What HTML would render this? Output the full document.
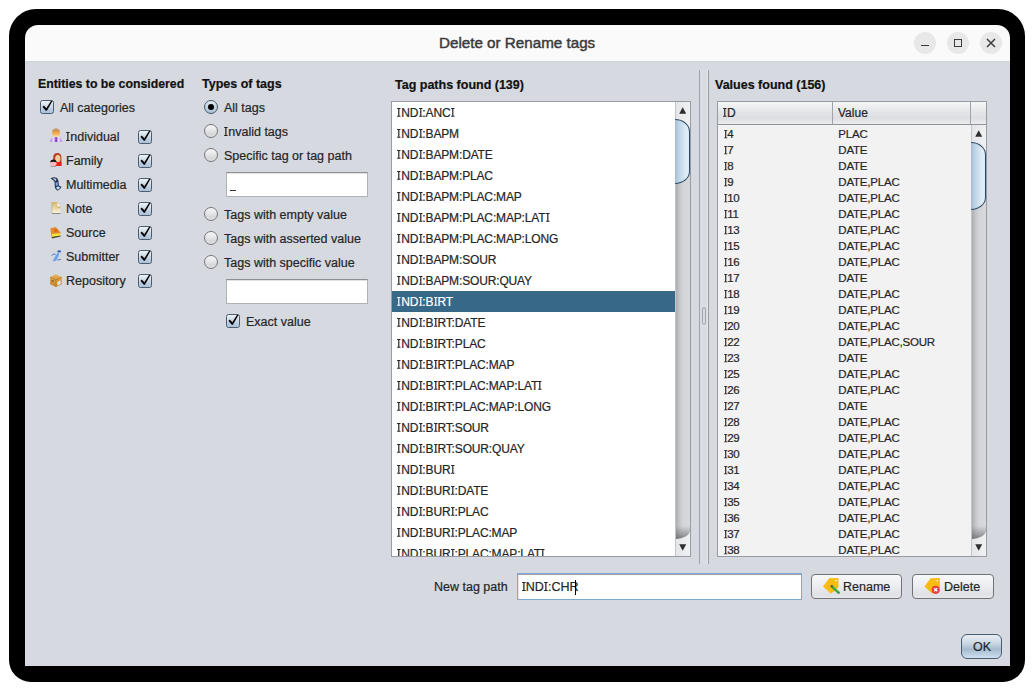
<!DOCTYPE html><html><head><meta charset="utf-8"><style>
html,body{margin:0;padding:0;background:#fff;width:1034px;height:691px;overflow:hidden;position:relative;font-family:"Liberation Sans",sans-serif}
.a{position:absolute;box-sizing:border-box}
.t{position:absolute;white-space:nowrap;-webkit-text-stroke:0.2px currentColor}
.si{width:0.30em;height:0.72em;margin:0 0.02em;fill:currentColor;vertical-align:baseline;overflow:visible}
.cb{position:absolute;width:14px;height:14px;box-sizing:border-box;border:1.3px solid #4a5d70;border-radius:2.5px;background:linear-gradient(#edf1f6,#d3dee8 40%,#b9cde0 70%,#a9c2d8)}
.rd{position:absolute;width:14px;height:14px;box-sizing:border-box;border-radius:50%;border:1.3px solid #747679;background:linear-gradient(#f7f7f8,#e6e7e9 45%,#d5d6d9 75%,#e3e4e6)}
.rd.sel{border:1.5px solid #465a6d;background:linear-gradient(#e4ebf2,#c2d3e2 50%,#a9c0d5)}
.rd .dot{position:absolute;left:2.5px;top:2.5px;width:6px;height:6px;border-radius:50%;background:#000}
</style></head><body>
<div class="a" style="left:9px;top:9px;width:1016px;height:673px;background:#000;border-radius:27px 27px 22px 22px"></div>
<div class="a" style="left:24.5px;top:24.5px;width:985.0px;height:36.5px;background:#fafafa;border-radius:13px 13px 0 0"></div>
<div class="a" style="left:24.5px;top:61px;width:985.0px;height:605px;background:#d6d9e0"></div>
<div class="a" style="left:25px;top:61px;width:984px;height:1px;background:#cfd2d8"></div>
<div class="t" style="left:439px;top:34.5px;font-size:15.2px;line-height:16px;font-weight:normal;color:#3a3a3a;-webkit-text-stroke:0.45px #3a3a3a">Delete or Rename tags</div>
<div class="a" style="left:914px;top:32px;width:22px;height:22px;border-radius:50%;background:#e8e8e8"></div>
<div class="a" style="left:947px;top:32px;width:22px;height:22px;border-radius:50%;background:#e8e8e8"></div>
<div class="a" style="left:980px;top:32px;width:22px;height:22px;border-radius:50%;background:#e8e8e8"></div>
<div class="a" style="left:921px;top:44.5px;width:8px;height:1.5px;background:#3c3c3c"></div>
<div class="a" style="left:954px;top:39px;width:8px;height:8px;border:1.5px solid #3c3c3c"></div>
<svg class="a" style="left:986px;top:37.7px" width="10" height="10" viewBox="0 0 10 10"><path d="M1 1L9 9M9 1L1 9" stroke="#3c3c3c" stroke-width="1.5"/></svg>
<div class="t" style="left:38px;top:76.0px;font-size:12.3px;line-height:16px;font-weight:bold;color:#111;">Entities to be considered</div>
<div class="cb" style="left:40px;top:100px"><svg width="14" height="14" viewBox="0 0 14 14" style="position:absolute;left:-0.3px;top:-0.3px;overflow:visible"><path d="M1.5 5.9 L2.9 4.6 L5.3 7.3 L10.1 -0.3 L11.5 0.0 L5.9 9.7 L4.8 9.7 Z" fill="#000"/></svg></div>
<div class="t" style="left:60px;top:100.0px;font-size:12.5px;line-height:16px;font-weight:normal;color:#252525;">All categories</div>
<div class="t" style="left:66px;top:129.0px;font-size:12.5px;line-height:16px;font-weight:normal;color:#252525;"><svg class="si" viewBox="0 0 30 72"><path d="M1 0H29V7.5H20V64.5H29V72H1V64.5H10V7.5H1Z"/></svg>ndividual</div>
<div class="cb" style="left:138px;top:130px"><svg width="14" height="14" viewBox="0 0 14 14" style="position:absolute;left:-0.3px;top:-0.3px;overflow:visible"><path d="M1.5 5.9 L2.9 4.6 L5.3 7.3 L10.1 -0.3 L11.5 0.0 L5.9 9.7 L4.8 9.7 Z" fill="#000"/></svg></div>
<div class="t" style="left:66px;top:153.0px;font-size:12.5px;line-height:16px;font-weight:normal;color:#252525;">Family</div>
<div class="cb" style="left:138px;top:154px"><svg width="14" height="14" viewBox="0 0 14 14" style="position:absolute;left:-0.3px;top:-0.3px;overflow:visible"><path d="M1.5 5.9 L2.9 4.6 L5.3 7.3 L10.1 -0.3 L11.5 0.0 L5.9 9.7 L4.8 9.7 Z" fill="#000"/></svg></div>
<div class="t" style="left:66px;top:177.0px;font-size:12.5px;line-height:16px;font-weight:normal;color:#252525;">Multimedia</div>
<div class="cb" style="left:138px;top:178px"><svg width="14" height="14" viewBox="0 0 14 14" style="position:absolute;left:-0.3px;top:-0.3px;overflow:visible"><path d="M1.5 5.9 L2.9 4.6 L5.3 7.3 L10.1 -0.3 L11.5 0.0 L5.9 9.7 L4.8 9.7 Z" fill="#000"/></svg></div>
<div class="t" style="left:66px;top:201.0px;font-size:12.5px;line-height:16px;font-weight:normal;color:#252525;">Note</div>
<div class="cb" style="left:138px;top:202px"><svg width="14" height="14" viewBox="0 0 14 14" style="position:absolute;left:-0.3px;top:-0.3px;overflow:visible"><path d="M1.5 5.9 L2.9 4.6 L5.3 7.3 L10.1 -0.3 L11.5 0.0 L5.9 9.7 L4.8 9.7 Z" fill="#000"/></svg></div>
<div class="t" style="left:66px;top:225.0px;font-size:12.5px;line-height:16px;font-weight:normal;color:#252525;">Source</div>
<div class="cb" style="left:138px;top:226px"><svg width="14" height="14" viewBox="0 0 14 14" style="position:absolute;left:-0.3px;top:-0.3px;overflow:visible"><path d="M1.5 5.9 L2.9 4.6 L5.3 7.3 L10.1 -0.3 L11.5 0.0 L5.9 9.7 L4.8 9.7 Z" fill="#000"/></svg></div>
<div class="t" style="left:66px;top:249.0px;font-size:12.5px;line-height:16px;font-weight:normal;color:#252525;">Submitter</div>
<div class="cb" style="left:138px;top:250px"><svg width="14" height="14" viewBox="0 0 14 14" style="position:absolute;left:-0.3px;top:-0.3px;overflow:visible"><path d="M1.5 5.9 L2.9 4.6 L5.3 7.3 L10.1 -0.3 L11.5 0.0 L5.9 9.7 L4.8 9.7 Z" fill="#000"/></svg></div>
<div class="t" style="left:66px;top:273.0px;font-size:12.5px;line-height:16px;font-weight:normal;color:#252525;">Repository</div>
<div class="cb" style="left:138px;top:274px"><svg width="14" height="14" viewBox="0 0 14 14" style="position:absolute;left:-0.3px;top:-0.3px;overflow:visible"><path d="M1.5 5.9 L2.9 4.6 L5.3 7.3 L10.1 -0.3 L11.5 0.0 L5.9 9.7 L4.8 9.7 Z" fill="#000"/></svg></div>
<div class="t" style="left:202px;top:76.0px;font-size:12.5px;line-height:16px;font-weight:bold;color:#111;">Types of tags</div>
<div class="rd sel" style="left:204px;top:100px"><div class="dot"></div></div>
<div class="t" style="left:224px;top:100.0px;font-size:12.5px;line-height:16px;font-weight:normal;color:#252525;">All tags</div>
<div class="rd" style="left:204px;top:124px"></div>
<div class="t" style="left:224px;top:124.0px;font-size:12.5px;line-height:16px;font-weight:normal;color:#252525;"><svg class="si" viewBox="0 0 30 72"><path d="M1 0H29V7.5H20V64.5H29V72H1V64.5H10V7.5H1Z"/></svg>nvalid tags</div>
<div class="rd" style="left:204px;top:148px"></div>
<div class="t" style="left:224px;top:148.0px;font-size:12.5px;line-height:16px;font-weight:normal;color:#252525;">Specific tag or tag path</div>
<div class="rd" style="left:204px;top:207px"></div>
<div class="t" style="left:224px;top:207.0px;font-size:12.5px;line-height:16px;font-weight:normal;color:#252525;">Tags with empty value</div>
<div class="rd" style="left:204px;top:231px"></div>
<div class="t" style="left:224px;top:231.0px;font-size:12.5px;line-height:16px;font-weight:normal;color:#252525;">Tags with asserted value</div>
<div class="rd" style="left:204px;top:255px"></div>
<div class="t" style="left:224px;top:255.0px;font-size:12.5px;line-height:16px;font-weight:normal;color:#252525;">Tags with specific value</div>
<div class="a" style="left:226px;top:172px;width:142px;height:25px;background:#fff;border:1px solid #b0b1b4;border-top:1.5px solid #8e8f92;box-shadow:inset 0 1px 0 #e2e2e2"></div>
<div class="a" style="left:230px;top:190px;width:6px;height:1px;background:#333"></div>
<div class="a" style="left:226px;top:279px;width:142px;height:25px;background:#fff;border:1px solid #b0b1b4;border-top:1.5px solid #8e8f92;box-shadow:inset 0 1px 0 #e2e2e2"></div>
<div class="cb" style="left:226px;top:314px"><svg width="14" height="14" viewBox="0 0 14 14" style="position:absolute;left:-0.3px;top:-0.3px;overflow:visible"><path d="M1.5 5.9 L2.9 4.6 L5.3 7.3 L10.1 -0.3 L11.5 0.0 L5.9 9.7 L4.8 9.7 Z" fill="#000"/></svg></div>
<div class="t" style="left:246px;top:314.0px;font-size:12.5px;line-height:16px;font-weight:normal;color:#252525;">Exact value</div>
<div class="t" style="left:395px;top:77.0px;font-size:12.5px;line-height:16px;font-weight:bold;color:#111;">Tag paths found (139)</div>
<div class="a" style="left:391px;top:101px;width:300px;height:456px;background:#fff;border:1px solid #979ca4"></div>
<div class="a" style="left:392px;top:102px;width:283px;height:454px;overflow:hidden">
<div class="t" style="left:5.2px;top:3.0px;font-size:12px;line-height:16px;font-weight:normal;color:#252525;letter-spacing:-0.15px"><svg class="si" viewBox="0 0 30 72"><path d="M1 0H29V7.5H20V64.5H29V72H1V64.5H10V7.5H1Z"/></svg>ND<svg class="si" viewBox="0 0 30 72"><path d="M1 0H29V7.5H20V64.5H29V72H1V64.5H10V7.5H1Z"/></svg>:ANC<svg class="si" viewBox="0 0 30 72"><path d="M1 0H29V7.5H20V64.5H29V72H1V64.5H10V7.5H1Z"/></svg></div>
<div class="t" style="left:5.2px;top:24.0px;font-size:12px;line-height:16px;font-weight:normal;color:#252525;letter-spacing:-0.15px"><svg class="si" viewBox="0 0 30 72"><path d="M1 0H29V7.5H20V64.5H29V72H1V64.5H10V7.5H1Z"/></svg>ND<svg class="si" viewBox="0 0 30 72"><path d="M1 0H29V7.5H20V64.5H29V72H1V64.5H10V7.5H1Z"/></svg>:BAPM</div>
<div class="t" style="left:5.2px;top:45.0px;font-size:12px;line-height:16px;font-weight:normal;color:#252525;letter-spacing:-0.15px"><svg class="si" viewBox="0 0 30 72"><path d="M1 0H29V7.5H20V64.5H29V72H1V64.5H10V7.5H1Z"/></svg>ND<svg class="si" viewBox="0 0 30 72"><path d="M1 0H29V7.5H20V64.5H29V72H1V64.5H10V7.5H1Z"/></svg>:BAPM:DATE</div>
<div class="t" style="left:5.2px;top:66.0px;font-size:12px;line-height:16px;font-weight:normal;color:#252525;letter-spacing:-0.15px"><svg class="si" viewBox="0 0 30 72"><path d="M1 0H29V7.5H20V64.5H29V72H1V64.5H10V7.5H1Z"/></svg>ND<svg class="si" viewBox="0 0 30 72"><path d="M1 0H29V7.5H20V64.5H29V72H1V64.5H10V7.5H1Z"/></svg>:BAPM:PLAC</div>
<div class="t" style="left:5.2px;top:87.0px;font-size:12px;line-height:16px;font-weight:normal;color:#252525;letter-spacing:-0.15px"><svg class="si" viewBox="0 0 30 72"><path d="M1 0H29V7.5H20V64.5H29V72H1V64.5H10V7.5H1Z"/></svg>ND<svg class="si" viewBox="0 0 30 72"><path d="M1 0H29V7.5H20V64.5H29V72H1V64.5H10V7.5H1Z"/></svg>:BAPM:PLAC:MAP</div>
<div class="t" style="left:5.2px;top:108.0px;font-size:12px;line-height:16px;font-weight:normal;color:#252525;letter-spacing:-0.15px"><svg class="si" viewBox="0 0 30 72"><path d="M1 0H29V7.5H20V64.5H29V72H1V64.5H10V7.5H1Z"/></svg>ND<svg class="si" viewBox="0 0 30 72"><path d="M1 0H29V7.5H20V64.5H29V72H1V64.5H10V7.5H1Z"/></svg>:BAPM:PLAC:MAP:LAT<svg class="si" viewBox="0 0 30 72"><path d="M1 0H29V7.5H20V64.5H29V72H1V64.5H10V7.5H1Z"/></svg></div>
<div class="t" style="left:5.2px;top:129.0px;font-size:12px;line-height:16px;font-weight:normal;color:#252525;letter-spacing:-0.15px"><svg class="si" viewBox="0 0 30 72"><path d="M1 0H29V7.5H20V64.5H29V72H1V64.5H10V7.5H1Z"/></svg>ND<svg class="si" viewBox="0 0 30 72"><path d="M1 0H29V7.5H20V64.5H29V72H1V64.5H10V7.5H1Z"/></svg>:BAPM:PLAC:MAP:LONG</div>
<div class="t" style="left:5.2px;top:150.0px;font-size:12px;line-height:16px;font-weight:normal;color:#252525;letter-spacing:-0.15px"><svg class="si" viewBox="0 0 30 72"><path d="M1 0H29V7.5H20V64.5H29V72H1V64.5H10V7.5H1Z"/></svg>ND<svg class="si" viewBox="0 0 30 72"><path d="M1 0H29V7.5H20V64.5H29V72H1V64.5H10V7.5H1Z"/></svg>:BAPM:SOUR</div>
<div class="t" style="left:5.2px;top:171.0px;font-size:12px;line-height:16px;font-weight:normal;color:#252525;letter-spacing:-0.15px"><svg class="si" viewBox="0 0 30 72"><path d="M1 0H29V7.5H20V64.5H29V72H1V64.5H10V7.5H1Z"/></svg>ND<svg class="si" viewBox="0 0 30 72"><path d="M1 0H29V7.5H20V64.5H29V72H1V64.5H10V7.5H1Z"/></svg>:BAPM:SOUR:QUAY</div>
<div class="a" style="left:0px;top:189px;width:283px;height:21px;background:#376888"></div>
<div class="t" style="left:5.2px;top:192.0px;font-size:12px;line-height:16px;font-weight:normal;color:#fff;letter-spacing:-0.15px"><svg class="si" viewBox="0 0 30 72"><path d="M1 0H29V7.5H20V64.5H29V72H1V64.5H10V7.5H1Z"/></svg>ND<svg class="si" viewBox="0 0 30 72"><path d="M1 0H29V7.5H20V64.5H29V72H1V64.5H10V7.5H1Z"/></svg>:B<svg class="si" viewBox="0 0 30 72"><path d="M1 0H29V7.5H20V64.5H29V72H1V64.5H10V7.5H1Z"/></svg>RT</div>
<div class="t" style="left:5.2px;top:213.0px;font-size:12px;line-height:16px;font-weight:normal;color:#252525;letter-spacing:-0.15px"><svg class="si" viewBox="0 0 30 72"><path d="M1 0H29V7.5H20V64.5H29V72H1V64.5H10V7.5H1Z"/></svg>ND<svg class="si" viewBox="0 0 30 72"><path d="M1 0H29V7.5H20V64.5H29V72H1V64.5H10V7.5H1Z"/></svg>:B<svg class="si" viewBox="0 0 30 72"><path d="M1 0H29V7.5H20V64.5H29V72H1V64.5H10V7.5H1Z"/></svg>RT:DATE</div>
<div class="t" style="left:5.2px;top:234.0px;font-size:12px;line-height:16px;font-weight:normal;color:#252525;letter-spacing:-0.15px"><svg class="si" viewBox="0 0 30 72"><path d="M1 0H29V7.5H20V64.5H29V72H1V64.5H10V7.5H1Z"/></svg>ND<svg class="si" viewBox="0 0 30 72"><path d="M1 0H29V7.5H20V64.5H29V72H1V64.5H10V7.5H1Z"/></svg>:B<svg class="si" viewBox="0 0 30 72"><path d="M1 0H29V7.5H20V64.5H29V72H1V64.5H10V7.5H1Z"/></svg>RT:PLAC</div>
<div class="t" style="left:5.2px;top:255.0px;font-size:12px;line-height:16px;font-weight:normal;color:#252525;letter-spacing:-0.15px"><svg class="si" viewBox="0 0 30 72"><path d="M1 0H29V7.5H20V64.5H29V72H1V64.5H10V7.5H1Z"/></svg>ND<svg class="si" viewBox="0 0 30 72"><path d="M1 0H29V7.5H20V64.5H29V72H1V64.5H10V7.5H1Z"/></svg>:B<svg class="si" viewBox="0 0 30 72"><path d="M1 0H29V7.5H20V64.5H29V72H1V64.5H10V7.5H1Z"/></svg>RT:PLAC:MAP</div>
<div class="t" style="left:5.2px;top:276.0px;font-size:12px;line-height:16px;font-weight:normal;color:#252525;letter-spacing:-0.15px"><svg class="si" viewBox="0 0 30 72"><path d="M1 0H29V7.5H20V64.5H29V72H1V64.5H10V7.5H1Z"/></svg>ND<svg class="si" viewBox="0 0 30 72"><path d="M1 0H29V7.5H20V64.5H29V72H1V64.5H10V7.5H1Z"/></svg>:B<svg class="si" viewBox="0 0 30 72"><path d="M1 0H29V7.5H20V64.5H29V72H1V64.5H10V7.5H1Z"/></svg>RT:PLAC:MAP:LAT<svg class="si" viewBox="0 0 30 72"><path d="M1 0H29V7.5H20V64.5H29V72H1V64.5H10V7.5H1Z"/></svg></div>
<div class="t" style="left:5.2px;top:297.0px;font-size:12px;line-height:16px;font-weight:normal;color:#252525;letter-spacing:-0.15px"><svg class="si" viewBox="0 0 30 72"><path d="M1 0H29V7.5H20V64.5H29V72H1V64.5H10V7.5H1Z"/></svg>ND<svg class="si" viewBox="0 0 30 72"><path d="M1 0H29V7.5H20V64.5H29V72H1V64.5H10V7.5H1Z"/></svg>:B<svg class="si" viewBox="0 0 30 72"><path d="M1 0H29V7.5H20V64.5H29V72H1V64.5H10V7.5H1Z"/></svg>RT:PLAC:MAP:LONG</div>
<div class="t" style="left:5.2px;top:318.0px;font-size:12px;line-height:16px;font-weight:normal;color:#252525;letter-spacing:-0.15px"><svg class="si" viewBox="0 0 30 72"><path d="M1 0H29V7.5H20V64.5H29V72H1V64.5H10V7.5H1Z"/></svg>ND<svg class="si" viewBox="0 0 30 72"><path d="M1 0H29V7.5H20V64.5H29V72H1V64.5H10V7.5H1Z"/></svg>:B<svg class="si" viewBox="0 0 30 72"><path d="M1 0H29V7.5H20V64.5H29V72H1V64.5H10V7.5H1Z"/></svg>RT:SOUR</div>
<div class="t" style="left:5.2px;top:339.0px;font-size:12px;line-height:16px;font-weight:normal;color:#252525;letter-spacing:-0.15px"><svg class="si" viewBox="0 0 30 72"><path d="M1 0H29V7.5H20V64.5H29V72H1V64.5H10V7.5H1Z"/></svg>ND<svg class="si" viewBox="0 0 30 72"><path d="M1 0H29V7.5H20V64.5H29V72H1V64.5H10V7.5H1Z"/></svg>:B<svg class="si" viewBox="0 0 30 72"><path d="M1 0H29V7.5H20V64.5H29V72H1V64.5H10V7.5H1Z"/></svg>RT:SOUR:QUAY</div>
<div class="t" style="left:5.2px;top:360.0px;font-size:12px;line-height:16px;font-weight:normal;color:#252525;letter-spacing:-0.15px"><svg class="si" viewBox="0 0 30 72"><path d="M1 0H29V7.5H20V64.5H29V72H1V64.5H10V7.5H1Z"/></svg>ND<svg class="si" viewBox="0 0 30 72"><path d="M1 0H29V7.5H20V64.5H29V72H1V64.5H10V7.5H1Z"/></svg>:BUR<svg class="si" viewBox="0 0 30 72"><path d="M1 0H29V7.5H20V64.5H29V72H1V64.5H10V7.5H1Z"/></svg></div>
<div class="t" style="left:5.2px;top:381.0px;font-size:12px;line-height:16px;font-weight:normal;color:#252525;letter-spacing:-0.15px"><svg class="si" viewBox="0 0 30 72"><path d="M1 0H29V7.5H20V64.5H29V72H1V64.5H10V7.5H1Z"/></svg>ND<svg class="si" viewBox="0 0 30 72"><path d="M1 0H29V7.5H20V64.5H29V72H1V64.5H10V7.5H1Z"/></svg>:BUR<svg class="si" viewBox="0 0 30 72"><path d="M1 0H29V7.5H20V64.5H29V72H1V64.5H10V7.5H1Z"/></svg>:DATE</div>
<div class="t" style="left:5.2px;top:402.0px;font-size:12px;line-height:16px;font-weight:normal;color:#252525;letter-spacing:-0.15px"><svg class="si" viewBox="0 0 30 72"><path d="M1 0H29V7.5H20V64.5H29V72H1V64.5H10V7.5H1Z"/></svg>ND<svg class="si" viewBox="0 0 30 72"><path d="M1 0H29V7.5H20V64.5H29V72H1V64.5H10V7.5H1Z"/></svg>:BUR<svg class="si" viewBox="0 0 30 72"><path d="M1 0H29V7.5H20V64.5H29V72H1V64.5H10V7.5H1Z"/></svg>:PLAC</div>
<div class="t" style="left:5.2px;top:423.0px;font-size:12px;line-height:16px;font-weight:normal;color:#252525;letter-spacing:-0.15px"><svg class="si" viewBox="0 0 30 72"><path d="M1 0H29V7.5H20V64.5H29V72H1V64.5H10V7.5H1Z"/></svg>ND<svg class="si" viewBox="0 0 30 72"><path d="M1 0H29V7.5H20V64.5H29V72H1V64.5H10V7.5H1Z"/></svg>:BUR<svg class="si" viewBox="0 0 30 72"><path d="M1 0H29V7.5H20V64.5H29V72H1V64.5H10V7.5H1Z"/></svg>:PLAC:MAP</div>
<div class="t" style="left:5.2px;top:444.0px;font-size:12px;line-height:16px;font-weight:normal;color:#252525;letter-spacing:-0.15px"><svg class="si" viewBox="0 0 30 72"><path d="M1 0H29V7.5H20V64.5H29V72H1V64.5H10V7.5H1Z"/></svg>ND<svg class="si" viewBox="0 0 30 72"><path d="M1 0H29V7.5H20V64.5H29V72H1V64.5H10V7.5H1Z"/></svg>:BUR<svg class="si" viewBox="0 0 30 72"><path d="M1 0H29V7.5H20V64.5H29V72H1V64.5H10V7.5H1Z"/></svg>:PLAC:MAP:LAT<svg class="si" viewBox="0 0 30 72"><path d="M1 0H29V7.5H20V64.5H29V72H1V64.5H10V7.5H1Z"/></svg></div>
</div>
<div class="a" style="left:675px;top:102px;width:15px;height:454px;background:linear-gradient(90deg,#a4a6aa,#c4c6ca 30%,#d3d5d9 55%,#d6d8dc)"></div>
<div class="a" style="left:675px;top:102px;width:15px;height:29px;background:linear-gradient(90deg,#e3e5e8,#eff1f3)"></div>
<div class="a" style="left:675px;top:531px;width:15px;height:25px;background:linear-gradient(90deg,#e3e5e8,#eff1f3)"></div>
<div class="a" style="left:675px;top:496px;width:15px;height:43px;background:linear-gradient(180deg,rgba(0,0,0,0) 70%,rgba(60,62,66,0.55)),linear-gradient(90deg,#a4a6aa,#c4c6ca 30%,#d3d5d9 55%,#d6d8dc);border-radius:0 0 14px 0/0 0 9px 0"></div>
<div class="a" style="left:675px;top:102px;width:1px;height:454px;background:#c3c5c9"></div>
<div class="a" style="left:675px;top:119px;width:15.299999999999955px;height:64.5px;background:linear-gradient(90deg,#a3bdd6,#bcd2e6 25%,#cfe1ef 55%,#e2eff8 85%,#d5e6f3);border:1.5px solid #2f4a63;border-left:none;border-radius:0 15.5px 15.5px 0/0 13px 13px 0"></div>
<svg class="a" style="left:678.8px;top:107px" width="8" height="8"><path d="M0.2 6.8L3.7 0.2L7.2 6.8Z" fill="#2e2e2e"/></svg>
<svg class="a" style="left:678.8px;top:543.5px" width="8" height="8"><path d="M0.2 0.2L3.7 6.8L7.2 0.2Z" fill="#2e2e2e"/></svg>
<div class="a" style="left:700px;top:70px;width:8px;height:494px;background:#d9dce2"></div>
<div class="a" style="left:699px;top:70px;width:1px;height:494px;background:#9fa3ab"></div>
<div class="a" style="left:707px;top:70px;width:1px;height:494px;background:#e5e7eb"></div>
<div class="a" style="left:708px;top:70px;width:1px;height:494px;background:#979ba3"></div>
<div class="a" style="left:702px;top:307px;width:4px;height:18px;border:1.1px solid #a0a4ab;border-radius:2px;box-shadow:0 1px 0 #eef0f3"></div>
<div class="t" style="left:715px;top:77.0px;font-size:12.5px;line-height:16px;font-weight:bold;color:#111;">Values found (156)</div>
<div class="a" style="left:717px;top:101px;width:270px;height:456px;background:#f2f2f2;border:1px solid #979ca4"></div>
<div class="a" style="left:718px;top:102px;width:268px;height:23px;background:linear-gradient(#f5f6f7,#e6e7ea 40%,#dcdee1 72%,#eaecee);border-bottom:1px solid #8f949c"></div>
<div class="a" style="left:832px;top:102px;width:1px;height:22px;background:#a0a3a8"></div>
<div class="a" style="left:970px;top:102px;width:1px;height:22px;background:#a0a3a8"></div>
<div class="t" style="left:723px;top:105.0px;font-size:12px;line-height:16px;font-weight:normal;color:#252525;"><svg class="si" viewBox="0 0 30 72"><path d="M1 0H29V7.5H20V64.5H29V72H1V64.5H10V7.5H1Z"/></svg>D</div>
<div class="t" style="left:838px;top:105.0px;font-size:12px;line-height:16px;font-weight:normal;color:#252525;">Value</div>
<div class="a" style="left:718px;top:125px;width:252px;height:431px;overflow:hidden">
<div class="t" style="left:5.3px;top:1.0px;font-size:11.5px;line-height:16px;font-weight:normal;color:#252525;letter-spacing:-0.2px"><svg class="si" viewBox="0 0 30 72"><path d="M1 0H29V7.5H20V64.5H29V72H1V64.5H10V7.5H1Z"/></svg>4</div>
<div class="t" style="left:120.3px;top:1.0px;font-size:11.5px;line-height:16px;font-weight:normal;color:#252525;letter-spacing:-0.2px">PLAC</div>
<div class="t" style="left:5.3px;top:17.0px;font-size:11.5px;line-height:16px;font-weight:normal;color:#252525;letter-spacing:-0.2px"><svg class="si" viewBox="0 0 30 72"><path d="M1 0H29V7.5H20V64.5H29V72H1V64.5H10V7.5H1Z"/></svg>7</div>
<div class="t" style="left:120.3px;top:17.0px;font-size:11.5px;line-height:16px;font-weight:normal;color:#252525;letter-spacing:-0.2px">DATE</div>
<div class="t" style="left:5.3px;top:33.0px;font-size:11.5px;line-height:16px;font-weight:normal;color:#252525;letter-spacing:-0.2px"><svg class="si" viewBox="0 0 30 72"><path d="M1 0H29V7.5H20V64.5H29V72H1V64.5H10V7.5H1Z"/></svg>8</div>
<div class="t" style="left:120.3px;top:33.0px;font-size:11.5px;line-height:16px;font-weight:normal;color:#252525;letter-spacing:-0.2px">DATE</div>
<div class="t" style="left:5.3px;top:49.0px;font-size:11.5px;line-height:16px;font-weight:normal;color:#252525;letter-spacing:-0.2px"><svg class="si" viewBox="0 0 30 72"><path d="M1 0H29V7.5H20V64.5H29V72H1V64.5H10V7.5H1Z"/></svg>9</div>
<div class="t" style="left:120.3px;top:49.0px;font-size:11.5px;line-height:16px;font-weight:normal;color:#252525;letter-spacing:-0.2px">DATE,PLAC</div>
<div class="t" style="left:5.3px;top:65.0px;font-size:11.5px;line-height:16px;font-weight:normal;color:#252525;letter-spacing:-0.2px"><svg class="si" viewBox="0 0 30 72"><path d="M1 0H29V7.5H20V64.5H29V72H1V64.5H10V7.5H1Z"/></svg>10</div>
<div class="t" style="left:120.3px;top:65.0px;font-size:11.5px;line-height:16px;font-weight:normal;color:#252525;letter-spacing:-0.2px">DATE,PLAC</div>
<div class="t" style="left:5.3px;top:81.0px;font-size:11.5px;line-height:16px;font-weight:normal;color:#252525;letter-spacing:-0.2px"><svg class="si" viewBox="0 0 30 72"><path d="M1 0H29V7.5H20V64.5H29V72H1V64.5H10V7.5H1Z"/></svg>11</div>
<div class="t" style="left:120.3px;top:81.0px;font-size:11.5px;line-height:16px;font-weight:normal;color:#252525;letter-spacing:-0.2px">DATE,PLAC</div>
<div class="t" style="left:5.3px;top:97.0px;font-size:11.5px;line-height:16px;font-weight:normal;color:#252525;letter-spacing:-0.2px"><svg class="si" viewBox="0 0 30 72"><path d="M1 0H29V7.5H20V64.5H29V72H1V64.5H10V7.5H1Z"/></svg>13</div>
<div class="t" style="left:120.3px;top:97.0px;font-size:11.5px;line-height:16px;font-weight:normal;color:#252525;letter-spacing:-0.2px">DATE,PLAC</div>
<div class="t" style="left:5.3px;top:113.0px;font-size:11.5px;line-height:16px;font-weight:normal;color:#252525;letter-spacing:-0.2px"><svg class="si" viewBox="0 0 30 72"><path d="M1 0H29V7.5H20V64.5H29V72H1V64.5H10V7.5H1Z"/></svg>15</div>
<div class="t" style="left:120.3px;top:113.0px;font-size:11.5px;line-height:16px;font-weight:normal;color:#252525;letter-spacing:-0.2px">DATE,PLAC</div>
<div class="t" style="left:5.3px;top:129.0px;font-size:11.5px;line-height:16px;font-weight:normal;color:#252525;letter-spacing:-0.2px"><svg class="si" viewBox="0 0 30 72"><path d="M1 0H29V7.5H20V64.5H29V72H1V64.5H10V7.5H1Z"/></svg>16</div>
<div class="t" style="left:120.3px;top:129.0px;font-size:11.5px;line-height:16px;font-weight:normal;color:#252525;letter-spacing:-0.2px">DATE,PLAC</div>
<div class="t" style="left:5.3px;top:145.0px;font-size:11.5px;line-height:16px;font-weight:normal;color:#252525;letter-spacing:-0.2px"><svg class="si" viewBox="0 0 30 72"><path d="M1 0H29V7.5H20V64.5H29V72H1V64.5H10V7.5H1Z"/></svg>17</div>
<div class="t" style="left:120.3px;top:145.0px;font-size:11.5px;line-height:16px;font-weight:normal;color:#252525;letter-spacing:-0.2px">DATE</div>
<div class="t" style="left:5.3px;top:161.0px;font-size:11.5px;line-height:16px;font-weight:normal;color:#252525;letter-spacing:-0.2px"><svg class="si" viewBox="0 0 30 72"><path d="M1 0H29V7.5H20V64.5H29V72H1V64.5H10V7.5H1Z"/></svg>18</div>
<div class="t" style="left:120.3px;top:161.0px;font-size:11.5px;line-height:16px;font-weight:normal;color:#252525;letter-spacing:-0.2px">DATE,PLAC</div>
<div class="t" style="left:5.3px;top:177.0px;font-size:11.5px;line-height:16px;font-weight:normal;color:#252525;letter-spacing:-0.2px"><svg class="si" viewBox="0 0 30 72"><path d="M1 0H29V7.5H20V64.5H29V72H1V64.5H10V7.5H1Z"/></svg>19</div>
<div class="t" style="left:120.3px;top:177.0px;font-size:11.5px;line-height:16px;font-weight:normal;color:#252525;letter-spacing:-0.2px">DATE,PLAC</div>
<div class="t" style="left:5.3px;top:193.0px;font-size:11.5px;line-height:16px;font-weight:normal;color:#252525;letter-spacing:-0.2px"><svg class="si" viewBox="0 0 30 72"><path d="M1 0H29V7.5H20V64.5H29V72H1V64.5H10V7.5H1Z"/></svg>20</div>
<div class="t" style="left:120.3px;top:193.0px;font-size:11.5px;line-height:16px;font-weight:normal;color:#252525;letter-spacing:-0.2px">DATE,PLAC</div>
<div class="t" style="left:5.3px;top:209.0px;font-size:11.5px;line-height:16px;font-weight:normal;color:#252525;letter-spacing:-0.2px"><svg class="si" viewBox="0 0 30 72"><path d="M1 0H29V7.5H20V64.5H29V72H1V64.5H10V7.5H1Z"/></svg>22</div>
<div class="t" style="left:120.3px;top:209.0px;font-size:11.5px;line-height:16px;font-weight:normal;color:#252525;letter-spacing:-0.2px">DATE,PLAC,SOUR</div>
<div class="t" style="left:5.3px;top:225.0px;font-size:11.5px;line-height:16px;font-weight:normal;color:#252525;letter-spacing:-0.2px"><svg class="si" viewBox="0 0 30 72"><path d="M1 0H29V7.5H20V64.5H29V72H1V64.5H10V7.5H1Z"/></svg>23</div>
<div class="t" style="left:120.3px;top:225.0px;font-size:11.5px;line-height:16px;font-weight:normal;color:#252525;letter-spacing:-0.2px">DATE</div>
<div class="t" style="left:5.3px;top:241.0px;font-size:11.5px;line-height:16px;font-weight:normal;color:#252525;letter-spacing:-0.2px"><svg class="si" viewBox="0 0 30 72"><path d="M1 0H29V7.5H20V64.5H29V72H1V64.5H10V7.5H1Z"/></svg>25</div>
<div class="t" style="left:120.3px;top:241.0px;font-size:11.5px;line-height:16px;font-weight:normal;color:#252525;letter-spacing:-0.2px">DATE,PLAC</div>
<div class="t" style="left:5.3px;top:257.0px;font-size:11.5px;line-height:16px;font-weight:normal;color:#252525;letter-spacing:-0.2px"><svg class="si" viewBox="0 0 30 72"><path d="M1 0H29V7.5H20V64.5H29V72H1V64.5H10V7.5H1Z"/></svg>26</div>
<div class="t" style="left:120.3px;top:257.0px;font-size:11.5px;line-height:16px;font-weight:normal;color:#252525;letter-spacing:-0.2px">DATE,PLAC</div>
<div class="t" style="left:5.3px;top:273.0px;font-size:11.5px;line-height:16px;font-weight:normal;color:#252525;letter-spacing:-0.2px"><svg class="si" viewBox="0 0 30 72"><path d="M1 0H29V7.5H20V64.5H29V72H1V64.5H10V7.5H1Z"/></svg>27</div>
<div class="t" style="left:120.3px;top:273.0px;font-size:11.5px;line-height:16px;font-weight:normal;color:#252525;letter-spacing:-0.2px">DATE</div>
<div class="t" style="left:5.3px;top:289.0px;font-size:11.5px;line-height:16px;font-weight:normal;color:#252525;letter-spacing:-0.2px"><svg class="si" viewBox="0 0 30 72"><path d="M1 0H29V7.5H20V64.5H29V72H1V64.5H10V7.5H1Z"/></svg>28</div>
<div class="t" style="left:120.3px;top:289.0px;font-size:11.5px;line-height:16px;font-weight:normal;color:#252525;letter-spacing:-0.2px">DATE,PLAC</div>
<div class="t" style="left:5.3px;top:305.0px;font-size:11.5px;line-height:16px;font-weight:normal;color:#252525;letter-spacing:-0.2px"><svg class="si" viewBox="0 0 30 72"><path d="M1 0H29V7.5H20V64.5H29V72H1V64.5H10V7.5H1Z"/></svg>29</div>
<div class="t" style="left:120.3px;top:305.0px;font-size:11.5px;line-height:16px;font-weight:normal;color:#252525;letter-spacing:-0.2px">DATE,PLAC</div>
<div class="t" style="left:5.3px;top:321.0px;font-size:11.5px;line-height:16px;font-weight:normal;color:#252525;letter-spacing:-0.2px"><svg class="si" viewBox="0 0 30 72"><path d="M1 0H29V7.5H20V64.5H29V72H1V64.5H10V7.5H1Z"/></svg>30</div>
<div class="t" style="left:120.3px;top:321.0px;font-size:11.5px;line-height:16px;font-weight:normal;color:#252525;letter-spacing:-0.2px">DATE,PLAC</div>
<div class="t" style="left:5.3px;top:337.0px;font-size:11.5px;line-height:16px;font-weight:normal;color:#252525;letter-spacing:-0.2px"><svg class="si" viewBox="0 0 30 72"><path d="M1 0H29V7.5H20V64.5H29V72H1V64.5H10V7.5H1Z"/></svg>31</div>
<div class="t" style="left:120.3px;top:337.0px;font-size:11.5px;line-height:16px;font-weight:normal;color:#252525;letter-spacing:-0.2px">DATE,PLAC</div>
<div class="t" style="left:5.3px;top:353.0px;font-size:11.5px;line-height:16px;font-weight:normal;color:#252525;letter-spacing:-0.2px"><svg class="si" viewBox="0 0 30 72"><path d="M1 0H29V7.5H20V64.5H29V72H1V64.5H10V7.5H1Z"/></svg>34</div>
<div class="t" style="left:120.3px;top:353.0px;font-size:11.5px;line-height:16px;font-weight:normal;color:#252525;letter-spacing:-0.2px">DATE,PLAC</div>
<div class="t" style="left:5.3px;top:369.0px;font-size:11.5px;line-height:16px;font-weight:normal;color:#252525;letter-spacing:-0.2px"><svg class="si" viewBox="0 0 30 72"><path d="M1 0H29V7.5H20V64.5H29V72H1V64.5H10V7.5H1Z"/></svg>35</div>
<div class="t" style="left:120.3px;top:369.0px;font-size:11.5px;line-height:16px;font-weight:normal;color:#252525;letter-spacing:-0.2px">DATE,PLAC</div>
<div class="t" style="left:5.3px;top:385.0px;font-size:11.5px;line-height:16px;font-weight:normal;color:#252525;letter-spacing:-0.2px"><svg class="si" viewBox="0 0 30 72"><path d="M1 0H29V7.5H20V64.5H29V72H1V64.5H10V7.5H1Z"/></svg>36</div>
<div class="t" style="left:120.3px;top:385.0px;font-size:11.5px;line-height:16px;font-weight:normal;color:#252525;letter-spacing:-0.2px">DATE,PLAC</div>
<div class="t" style="left:5.3px;top:401.0px;font-size:11.5px;line-height:16px;font-weight:normal;color:#252525;letter-spacing:-0.2px"><svg class="si" viewBox="0 0 30 72"><path d="M1 0H29V7.5H20V64.5H29V72H1V64.5H10V7.5H1Z"/></svg>37</div>
<div class="t" style="left:120.3px;top:401.0px;font-size:11.5px;line-height:16px;font-weight:normal;color:#252525;letter-spacing:-0.2px">DATE,PLAC</div>
<div class="t" style="left:5.3px;top:417.0px;font-size:11.5px;line-height:16px;font-weight:normal;color:#252525;letter-spacing:-0.2px"><svg class="si" viewBox="0 0 30 72"><path d="M1 0H29V7.5H20V64.5H29V72H1V64.5H10V7.5H1Z"/></svg>38</div>
<div class="t" style="left:120.3px;top:417.0px;font-size:11.5px;line-height:16px;font-weight:normal;color:#252525;letter-spacing:-0.2px">DATE,PLAC</div>
</div>
<div class="a" style="left:971px;top:125px;width:15px;height:431px;background:linear-gradient(90deg,#a4a6aa,#c4c6ca 30%,#d3d5d9 55%,#d6d8dc)"></div>
<div class="a" style="left:971px;top:125px;width:15px;height:29px;background:linear-gradient(90deg,#e3e5e8,#eff1f3)"></div>
<div class="a" style="left:971px;top:531px;width:15px;height:25px;background:linear-gradient(90deg,#e3e5e8,#eff1f3)"></div>
<div class="a" style="left:971px;top:496px;width:15px;height:43px;background:linear-gradient(180deg,rgba(0,0,0,0) 70%,rgba(60,62,66,0.55)),linear-gradient(90deg,#a4a6aa,#c4c6ca 30%,#d3d5d9 55%,#d6d8dc);border-radius:0 0 14px 0/0 0 9px 0"></div>
<div class="a" style="left:971px;top:125px;width:1px;height:431px;background:#c3c5c9"></div>
<div class="a" style="left:971px;top:142px;width:15.299999999999955px;height:67.80000000000001px;background:linear-gradient(90deg,#a3bdd6,#bcd2e6 25%,#cfe1ef 55%,#e2eff8 85%,#d5e6f3);border:1.5px solid #2f4a63;border-left:none;border-radius:0 15.5px 15.5px 0/0 13px 13px 0"></div>
<svg class="a" style="left:974.8px;top:130px" width="8" height="8"><path d="M0.2 6.8L3.7 0.2L7.2 6.8Z" fill="#2e2e2e"/></svg>
<svg class="a" style="left:974.8px;top:543.5px" width="8" height="8"><path d="M0.2 0.2L3.7 6.8L7.2 0.2Z" fill="#2e2e2e"/></svg>
<div class="t" style="left:434px;top:579.0px;font-size:12.5px;line-height:16px;font-weight:normal;color:#252525;">New tag path</div>
<div class="a" style="left:516.5px;top:573px;width:285.5px;height:27px;background:#fff;border:1.7px solid #7ea9d4;box-shadow:inset 0 1px 0 #a3a4a7, inset 1px 0 0 #e4e6ea"></div>
<div class="t" style="left:521.5px;top:579.0px;font-size:12.5px;line-height:16px;font-weight:normal;color:#252525;"><svg class="si" viewBox="0 0 30 72"><path d="M1 0H29V7.5H20V64.5H29V72H1V64.5H10V7.5H1Z"/></svg>ND<svg class="si" viewBox="0 0 30 72"><path d="M1 0H29V7.5H20V64.5H29V72H1V64.5H10V7.5H1Z"/></svg>:CHR</div>
<div class="a" style="left:575px;top:580px;width:1px;height:15px;background:#000"></div>
<div class="a" style="left:811px;top:574px;width:91px;height:25px;background:linear-gradient(#f7f8fa,#eceef1 45%,#dfe1e5 85%,#e6e8eb);border:1px solid #707378;border-radius:4px"></div>
<div class="t" style="left:843px;top:579.0px;font-size:12.5px;line-height:16px;font-weight:normal;color:#252525;">Rename</div>
<div class="a" style="left:912px;top:574px;width:82px;height:25px;background:linear-gradient(#f7f8fa,#eceef1 45%,#dfe1e5 85%,#e6e8eb);border:1px solid #707378;border-radius:4px"></div>
<div class="t" style="left:944px;top:579.0px;font-size:12.5px;line-height:16px;font-weight:normal;color:#252525;">Delete</div>
<svg class="a" style="left:0;top:0" width="1034" height="691" viewBox="0 0 1034 691"><path d="M823.0 586.4 L829.2 578.3 L838.4 578.1 L838.5 587.2 L831.0 593.8 Z" fill="#f8bb14"/><circle cx="835.9" cy="580.6" r="0.9" fill="#fff7d0"/><path d="M832.2 586.6 L838.6 592.6" stroke="#2f9a2f" stroke-width="2.6" stroke-linecap="round"/><path d="M833.2 586.8 L838.2 591.6" stroke="#7ad66a" stroke-width="0.9" stroke-linecap="round"/><circle cx="831.6" cy="586.2" r="1.1" fill="#6b4a20"/><path d="M924.4 586.4 L930.6 578.3 L939.8 578.1 L939.9 587.2 L932.4 593.8 Z" fill="#f8bb14"/><circle cx="937.3" cy="580.6" r="0.9" fill="#fff7d0"/><circle cx="935.7" cy="589.8" r="4.1" fill="#e93b3b"/><path d="M934.1 588.2 L937.3 591.4 M937.3 588.2 L934.1 591.4" stroke="#fff" stroke-width="1.3"/></svg>
<div class="a" style="left:961px;top:634px;width:41px;height:25px;background:linear-gradient(#e8ecf2,#ccd8e3 35%,#a6bbcf 62%,#c3d6e8 90%,#cfe0ef);border:1.5px solid #475c70;border-radius:6px;box-shadow:0 0 1px #eef0f4"></div>
<div class="t" style="left:973px;top:639.0px;font-size:12.5px;line-height:16px;font-weight:normal;color:#252525;">OK</div>
<svg class="a" style="left:0;top:0" width="1034" height="691" viewBox="0 0 1034 691">
<defs>
<linearGradient id="gFace" x1="0" y1="0" x2="0" y2="1"><stop offset="0" stop-color="#d9782a"/><stop offset="0.6" stop-color="#f5b25c"/><stop offset="1" stop-color="#fbe6a0"/></linearGradient>
<linearGradient id="gPurp" x1="0" y1="0" x2="1" y2="0"><stop offset="0" stop-color="#b77de8"/><stop offset="0.3" stop-color="#e6dbff"/><stop offset="0.5" stop-color="#9c56d0"/><stop offset="0.7" stop-color="#e6dbff"/><stop offset="1" stop-color="#b77de8"/></linearGradient>
<linearGradient id="gNote" x1="0" y1="0" x2="0" y2="1"><stop offset="0" stop-color="#d7b46e"/><stop offset="1" stop-color="#fbf3dc"/></linearGradient>
<linearGradient id="gBox" x1="0" y1="0" x2="0" y2="1"><stop offset="0" stop-color="#e9b35a"/><stop offset="1" stop-color="#c8802c"/></linearGradient>
</defs>
<!-- Individual -->
<path d="M50 142 Q50.5 137.5 53.5 137 L58.5 137 Q61.8 137.5 62.2 142 Z" fill="url(#gPurp)"/>
<rect x="55.4" y="137.3" width="1.6" height="4.7" fill="#8a3fbf"/>
<ellipse cx="56" cy="133" rx="4" ry="4.3" fill="url(#gFace)"/>
<path d="M52.2 131.5 Q52.5 128.6 56 128.6 Q59.6 128.6 59.8 131.5 Q56 130.2 52.2 131.5Z" fill="#c79a6a"/>
<!-- Family -->
<path d="M53.2 165.5 L53.2 157 Q53.4 153 57.4 153 Q61.3 153.2 61.4 157.5 L61.4 165.5 Z" fill="#b8402a"/>
<ellipse cx="57.8" cy="158.6" rx="2.6" ry="3.6" fill="#f6cf98"/>
<path d="M56 162 L61.5 162 L61.5 166 L55 166 Z" fill="#e8231a"/>
<ellipse cx="53.2" cy="163.5" rx="3.4" ry="2.6" fill="#f7b9bd"/>
<path d="M49.9 162.3 Q50.6 159.6 53.3 159.6 Q56.2 159.6 56.7 162.3 Q53.2 161 49.9 162.3Z" fill="#111"/>
<rect x="50.5" y="166.2" width="5.5" height="0.8" fill="#8d9096"/>
<!-- Multimedia -->
<path d="M50.4 178.6 Q53.5 176.6 56.6 177.8 Q58.4 179 58.6 182 L58.8 185.2 Q59.6 186.6 61.6 186.8 Q60.4 189.6 57.6 190.8 Q55.2 189.8 54.8 187 L54.6 182.6 Q54.4 180.4 50.4 178.6Z" fill="#2b3350"/>
<path d="M52.6 178.6 Q55 177.8 56.4 179.4 L55.6 181.2 Q54.6 179.6 52.6 178.6Z" fill="#a8def8"/>
<path d="M55.6 182.4 L57.6 182.2 L57.8 185.6 L55.8 185.8Z" fill="#7fa8f6"/>
<path d="M56.2 187 L58.6 186.6 Q59.4 187.6 60.2 187.6 Q59.4 189 57.8 189.8 Q56.6 189 56.2 187Z" fill="#b4e4f8"/>
<!-- Note -->
<path d="M51.8 202 L57.4 202 L60.3 206.4 L60.3 213.2 L51.8 213.2 Z" fill="url(#gNote)"/>
<path d="M51.8 202 L51.8 213.2" stroke="#b5a78a" stroke-width="0.6"/>
<path d="M57.2 202.2 Q58.4 205 56.8 206.2 Q59 206.8 60.2 206.4 Z" fill="#fffbea"/>
<path d="M56.6 206.3 Q58.6 207.2 60.3 206.6 L60.3 207.6 Q58.2 208 56.4 206.8Z" fill="#c9a060"/>
<rect x="52" y="213" width="8.4" height="0.9" fill="#7d8088"/>
<!-- Source -->
<path d="M50.4 228.2 L55.8 227 L60.8 232.8 L56.5 236.8 L51.5 236.8 Z" fill="#e28a2e"/>
<ellipse cx="55.8" cy="230.6" rx="2" ry="1.6" fill="#e06d10"/>
<path d="M51.8 234 L60.4 233.2 L60.4 235.6 L52.2 237.2Z" fill="#f4e63a"/>
<path d="M51.4 237 L60.6 235.4 L60.8 236.4 L52.4 238.6 Z" fill="#4f4a3a"/>
<!-- Submitter -->
<ellipse cx="59.2" cy="251.4" rx="1.9" ry="1.1" fill="#2f64b8"/>
<path d="M58 252.2 Q59.5 253 58.8 255.5 L56.5 260.3 Q55 261.8 52.8 261 Q53.6 258.6 55.2 256.5 Z" fill="#6ea4ee"/>
<path d="M51.6 255.4 Q53.5 253.6 55.6 254.4" stroke="#3c6bb8" stroke-width="0.9" fill="none"/>
<path d="M57.5 260 L60.8 259.4" stroke="#3c6bb8" stroke-width="0.9" fill="none"/>
<!-- Repository -->
<path d="M50 277.2 L55.8 274.2 L61.8 277.2 L61.8 284.2 L55.8 287 L50 284.2 Z" fill="url(#gBox)"/>
<path d="M50 277.2 L55.8 279.8 L61.8 277.2" fill="none" stroke="#a86a23" stroke-width="0.6"/>
<path d="M55.8 279.8 L55.8 287" stroke="#b0722a" stroke-width="0.5"/>
<path d="M57.4 282 L60.6 280.6 L60.6 284 L57.4 285.4Z" fill="#d8ecf8"/>
<path d="M51.6 280.4 L53.8 281.4" stroke="#5a3b12" stroke-width="0.9"/>
</svg>
</body></html>
